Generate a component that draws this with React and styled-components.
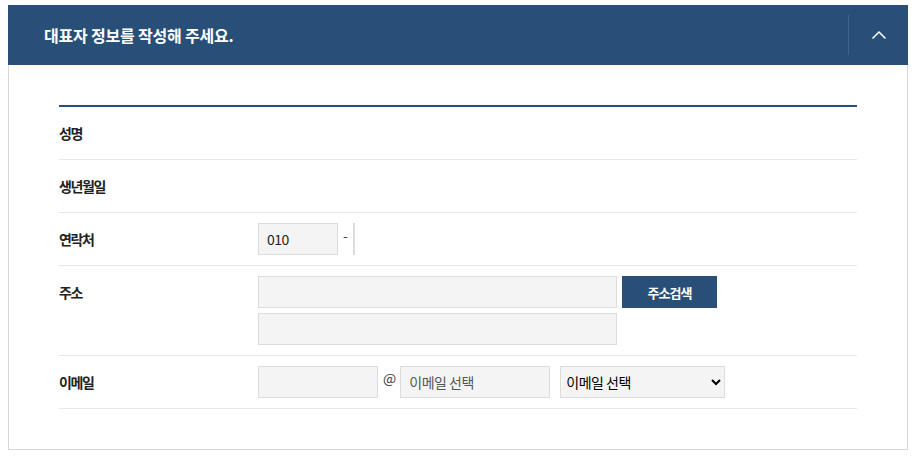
import React from "react";
import styled, { createGlobalStyle } from "styled-components";

const GlobalStyle = createGlobalStyle`
  body {
    margin: 5px 6px 0 8px;
    background: #fff;
    font-family: "Noto Sans CJK KR", "Noto Sans", sans-serif;
    color: #222;
  }
  * {
    box-sizing: border-box;
  }
`;

const Panel = styled.section`
  width: 900px;
`;

const Header = styled.div`
  display: flex;
  align-items: center;
  height: 60px;
  background: #284f78;
  padding-left: 36px;
`;

const Title = styled.h2`
  flex: 1;
  margin: 0;
  color: #fff;
  font-size: 16px;
  font-weight: 700;
  letter-spacing: -0.2px;
`;

const ToggleButton = styled.button`
  display: flex;
  align-items: center;
  justify-content: center;
  width: 60px;
  height: 40px;
  padding: 0;
  border: none;
  border-left: 1px solid rgba(255, 255, 255, 0.12);
  background: transparent;
  cursor: pointer;
`;

const Body = styled.div`
  border: 1px solid #d6d6d6;
  border-top: none;
  padding: 40px 50px 40px;
`;

const Table = styled.div`
  border-top: 2px solid #284f78;
`;

const Row = styled.div`
  display: flex;
  padding: 10px 0;
  min-height: 53px;
  border-bottom: 1px solid #e8e8e8;
`;

const Label = styled.div`
  width: 199px;
  flex-shrink: 0;
  line-height: 32px;
  font-size: 14px;
  font-weight: 700;
  letter-spacing: -1.4px;
  color: #222;
`;

const Fields = styled.div`
  display: flex;
  flex-direction: column;
  gap: 5px;
`;

const Line = styled.div`
  display: flex;
  align-items: center;
`;

const Input = styled.input`
  width: ${(p) => p.$w}px;
  height: 32px;
  padding: ${(p) => (p.$w < 4 ? "0" : "0 8px")};
  border: 1px solid #dcdcdc;
  background: #f4f4f4;
  font-family: inherit;
  font-size: 14px;
  letter-spacing: -0.5px;
  color: #222;
  outline: none;

  &::placeholder {
    color: #555;
  }
`;

const Sep = styled.span`
  margin: -4px ${(p) => p.$r}px 0 ${(p) => p.$l}px;
  font-size: 14px;
  color: #444;
  line-height: 32px;
  align-self: flex-start;
`;

const SearchButton = styled.button`
  width: 95px;
  height: 32px;
  margin-left: 5px;
  border: none;
  background: #284f78;
  color: #fff;
  font-family: inherit;
  font-size: 13px;
  font-weight: 700;
  letter-spacing: -1px;
  cursor: pointer;
`;

const Select = styled.select`
  width: 165px;
  height: 32px;
  margin-left: 10px;
  padding: 0 1px;
  border: 1px solid #dcdcdc;
  background: #f4f4f4;
  font-family: inherit;
  font-size: 14px;
  letter-spacing: -0.5px;
  color: #000;
  outline: none;
`;

function Chevron() {
  return (
    <svg width="16" height="10" viewBox="0 0 16 10" fill="none">
      <path d="M1.5 8.5 L8 2 L14.5 8.5" stroke="#fff" strokeWidth="1.5" />
    </svg>
  );
}

export default function App() {
  return (
    <>
      <GlobalStyle />
      <Panel>
        <Header>
          <Title>대표자 정보를 작성해 주세요.</Title>
          <ToggleButton aria-label="접기">
            <Chevron />
          </ToggleButton>
        </Header>
        <Body>
          <Table>
            <Row>
              <Label>성명</Label>
            </Row>
            <Row>
              <Label>생년월일</Label>
            </Row>
            <Row>
              <Label>연락처</Label>
              <Line>
                <Input $w={80} defaultValue="010" />
                <Sep $l={5} $r={5}>-</Sep>
                <Input $w={2} />
              </Line>
            </Row>
            <Row>
              <Label>주소</Label>
              <Fields>
                <Line>
                  <Input $w={359} />
                  <SearchButton>주소검색</SearchButton>
                </Line>
                <Line>
                  <Input $w={359} />
                </Line>
              </Fields>
            </Row>
            <Row>
              <Label>이메일</Label>
              <Line>
                <Input $w={120} />
                <Sep $l={5} $r={4}>@</Sep>
                <Input $w={150} placeholder="이메일 선택" />
                <Select defaultValue="">
                  <option value="">이메일 선택</option>
                  <option value="naver.com">naver.com</option>
                  <option value="gmail.com">gmail.com</option>
                </Select>
              </Line>
            </Row>
          </Table>
        </Body>
      </Panel>
    </>
  );
}
